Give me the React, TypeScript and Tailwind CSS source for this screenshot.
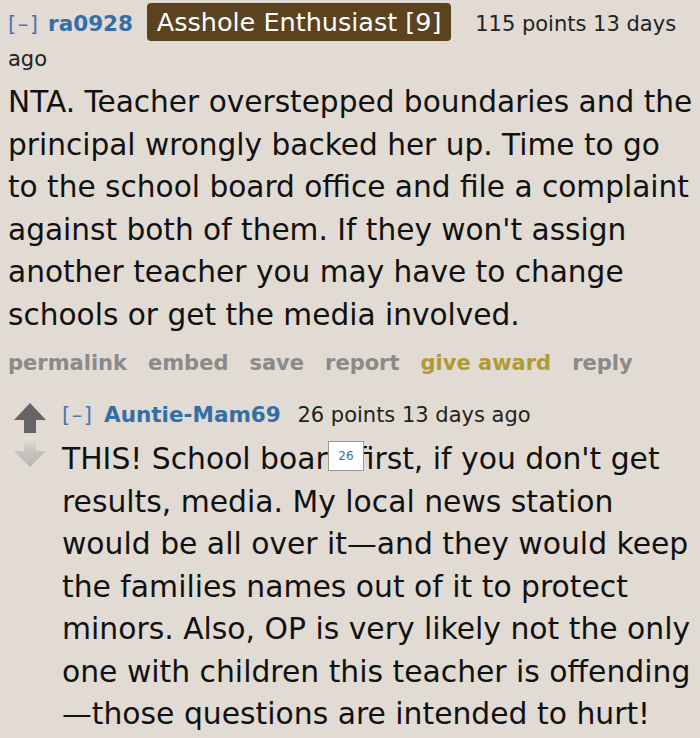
import * as React from "react";

const font = "font-['Verdana','DejaVu_Sans',sans-serif]";

const ArrowUp: React.FC = () => (
    <svg width="32" height="30" viewBox="0 0 32 30">
        <path d="M16 0 L32 17 L22 17 L22 30 L10 30 L10 17 L0 17 Z" fill="#656565" />
    </svg>
);

const ArrowDown: React.FC = () => (
    <svg width="32" height="30" viewBox="0 0 32 30">
        <defs>
            <linearGradient id="dn" x1="0" y1="0" x2="0" y2="1">
                <stop offset="0" stopColor="#e6e2dc" />
                <stop offset="0.45" stopColor="#c8c5c1" />
                <stop offset="1" stopColor="#b8b6b3" />
            </linearGradient>
        </defs>
        <path d="M10 0 L22 0 L22 14 L32 14 L16 30 L0 14 L10 14 Z" fill="url(#dn)" />
    </svg>
);

const actions = ["permalink", "embed", "save", "report"];

export default function App() {
    return (
        <div className={`min-h-[738px] w-[700px] overflow-hidden bg-[#e1dbd3] text-[#111] ${font}`}>
            <div className="pl-2 pr-[6px] pt-[5px]">
                <div className="text-[21px] leading-[35px]">
                    <span className="tracking-[1.5px] text-[#4a78b0]">[–]</span>{" "}
                    <span className="ml-[2px] text-[21.5px] font-bold text-[#336ea8]">ra0928</span>{" "}
                    <span className="mx-[7px] rounded-[4px] bg-[#5b4320] px-[10px] py-[4px] text-[25.5px] text-white">
                        Asshole Enthusiast [9]
                    </span>{" "}
                    <span className="ml-[10px] text-[#222]">115 points 13 days ago</span>
                </div>
                <p className="mt-[4px] text-[29.6px] leading-[42.5px]">
                    NTA. Teacher overstepped boundaries and the principal wrongly backed her up. Time to go to the
                    school board office and file a complaint against both of them. If they won't assign another
                    teacher you may have to change schools or get the media involved.
                </p>
                <div className="mt-[12px] flex gap-[21px] text-[21px] font-bold leading-[30px] text-[#8a8a8a]">
                    {actions.map((a) => (
                        <span key={a}>{a}</span>
                    ))}
                    <span className="text-[#b29a33]">give award</span>
                    <span>reply</span>
                </div>
                <div className="mt-[24px] flex">
                    <div className="ml-[6px] flex w-[48px] flex-col gap-[4px] pt-[1px]">
                        <ArrowUp />
                        <ArrowDown />
                    </div>
                    <div className="flex-1">
                        <div className="text-[21px] leading-[26px]">
                            <span className="tracking-[1.5px] text-[#4a78b0]">[–]</span>{" "}
                            <span className="ml-[4px] text-[21.5px] font-bold text-[#336ea8]">Auntie-Mam69</span>{" "}
                            <span className="ml-[10px] text-[#222]">26 points 13 days ago</span>
                        </div>
                        <div className="relative mt-[10px]">
                            <p className="text-[29.8px] leading-[42.5px]">
                                THIS! School board first, if you don't get results, media. My local news station
                                would be all over it—and they would keep the families names out of it to protect
                                minors. Also, OP is very likely not the only one with children this teacher is
                                offending—those questions are intended to hurt!
                            </p>
                            <span className="absolute left-[266px] top-[3px] flex h-[30px] w-[36px] items-center justify-center border border-[#9a9a9a] bg-white font-['DejaVu_Sans',sans-serif] text-[12px] text-[#3a6ea5]">
                                26
                            </span>
                        </div>
                    </div>
                </div>
            </div>
        </div>
    );
}
